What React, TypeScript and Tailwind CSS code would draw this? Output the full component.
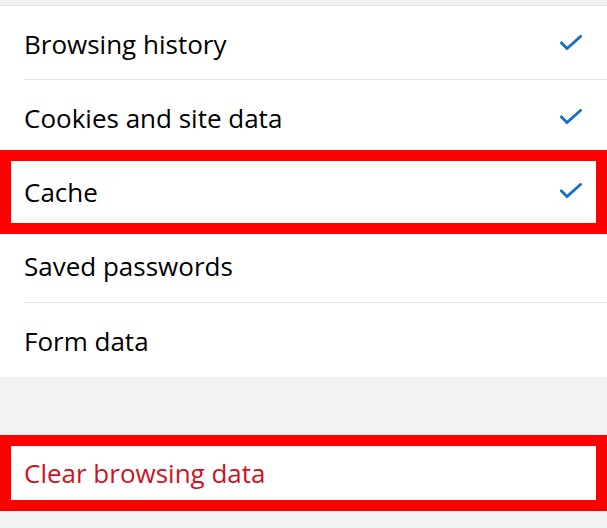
import React from 'react';

const items = [
  { label: 'Browsing history', checked: true },
  { label: 'Cookies and site data', checked: true },
  { label: 'Cache', checked: true, marked: true },
  { label: 'Saved passwords', checked: false },
  { label: 'Form data', checked: false },
];

const Check = () => (
  <svg width="22" height="16" viewBox="0 0 22 16" fill="none">
    <path d="M1.5 8 L7 13.5 L20.5 1.5" stroke="#1570c9" strokeWidth="2.8" strokeLinecap="square" />
  </svg>
);

export default function App() {
  return (
    <div className="w-[607px] h-[528px] overflow-hidden bg-[#f2f2f2] pt-[5px] font-['Open_Sans',sans-serif]">
      <div className="bg-white border-t border-[#e5e5e5]">
        {items.map((item, i) => (
          <div key={item.label} className="relative h-[74.2px] pl-6">
            <div
              className={`h-full flex items-center justify-between pr-[25px] ${
                i < items.length - 1 ? 'border-b border-[#e6e6e6]' : ''
              }`}
            >
              <span className="text-[26px] text-black pt-[3px]">{item.label}</span>
              {item.checked && <Check />}
            </div>
            {item.marked && (
              <div className="absolute left-0 right-0 top-[-4px] bottom-[-5px] border-[11px] border-[#ff0000]" />
            )}
          </div>
        ))}
      </div>

      <div className="mt-[58px] h-[76px] bg-white border-[11px] border-[#ff0000] flex items-center pl-[13px]">
        <span className="text-[26px] text-[#d0121f] pt-[2px]">Clear browsing data</span>
      </div>
    </div>
  );
}
